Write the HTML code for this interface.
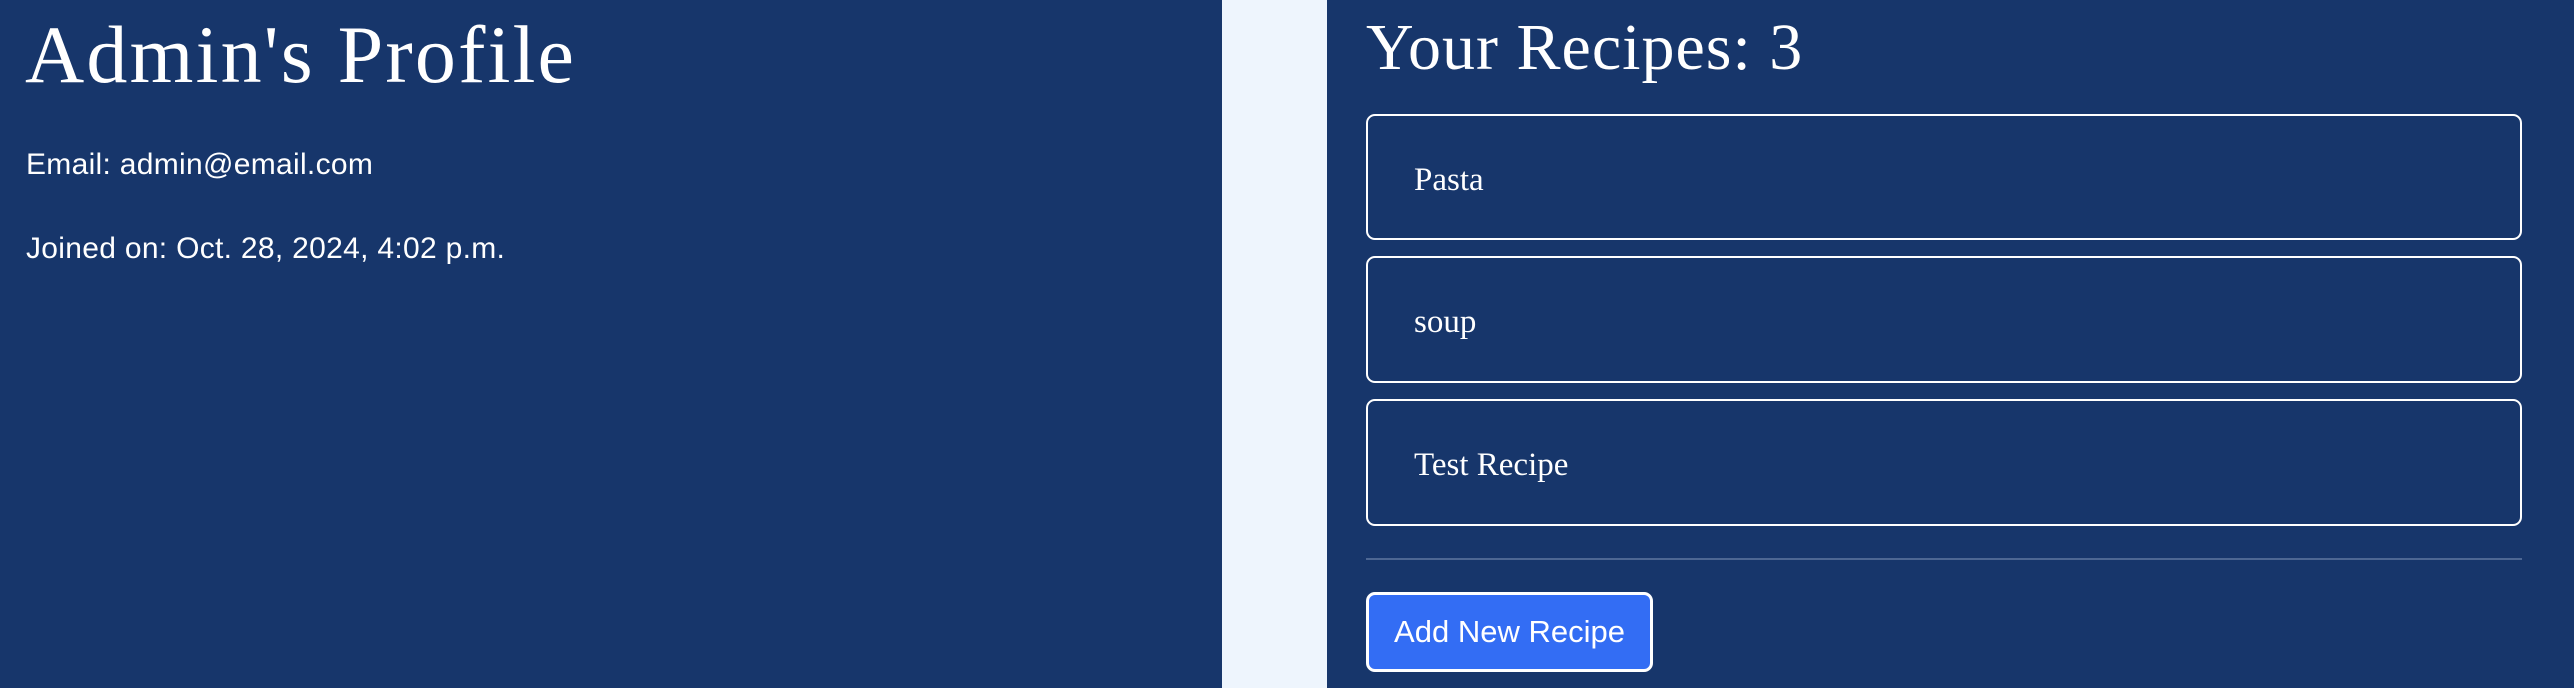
<!DOCTYPE html>
<html><head><style>
html,body{margin:0;padding:0;}
body{width:2574px;height:688px;background:#eef5fd;position:relative;overflow:hidden;font-family:"Liberation Sans",sans-serif;color:#fff;}
.l{position:absolute;left:0;top:0;width:1222px;height:688px;background:#17366b;}
.r{position:absolute;left:1327px;top:0;width:1247px;height:688px;background:#17366b;}
.h{position:absolute;font-family:"Liberation Serif",serif;white-space:nowrap;line-height:1;}
.t{position:absolute;white-space:nowrap;line-height:1;font-size:30px;letter-spacing:0.3px;}
.card{position:absolute;left:1366px;width:1156px;border:2px solid #fff;border-radius:9px;box-sizing:border-box;}
.card span{position:absolute;left:46px;font-family:"Liberation Serif",serif;font-size:33px;line-height:1;top:48px;}
.div{position:absolute;left:1366px;top:558px;width:1156px;height:2px;background:#4d6793;}
.btn{position:absolute;left:1366px;top:592px;width:287px;height:80px;box-sizing:border-box;border:3px solid #fff;border-radius:9px;background:#336df4;font-size:31px;line-height:74px;text-align:center;}
</style></head><body>
<div class="l"></div>
<div class="r"></div>
<div class="h" style="left:25px;top:14px;font-size:82px;letter-spacing:2.2px;">Admin's Profile</div>
<div class="t" style="left:26px;top:150px;">Email: admin@email.com</div>
<div class="t" style="left:26px;top:234px;">Joined on: Oct. 28, 2024, 4:02 p.m.</div>
<div class="h" style="left:1366px;top:15px;font-size:66px;letter-spacing:1px;">Your Recipes: 3</div>
<div class="card" style="top:114px;height:126px;"><span>Pasta</span></div>
<div class="card" style="top:256px;height:127px;"><span>soup</span></div>
<div class="card" style="top:399px;height:127px;"><span>Test Recipe</span></div>
<div class="div"></div>
<div class="btn">Add New Recipe</div>
</body></html>
